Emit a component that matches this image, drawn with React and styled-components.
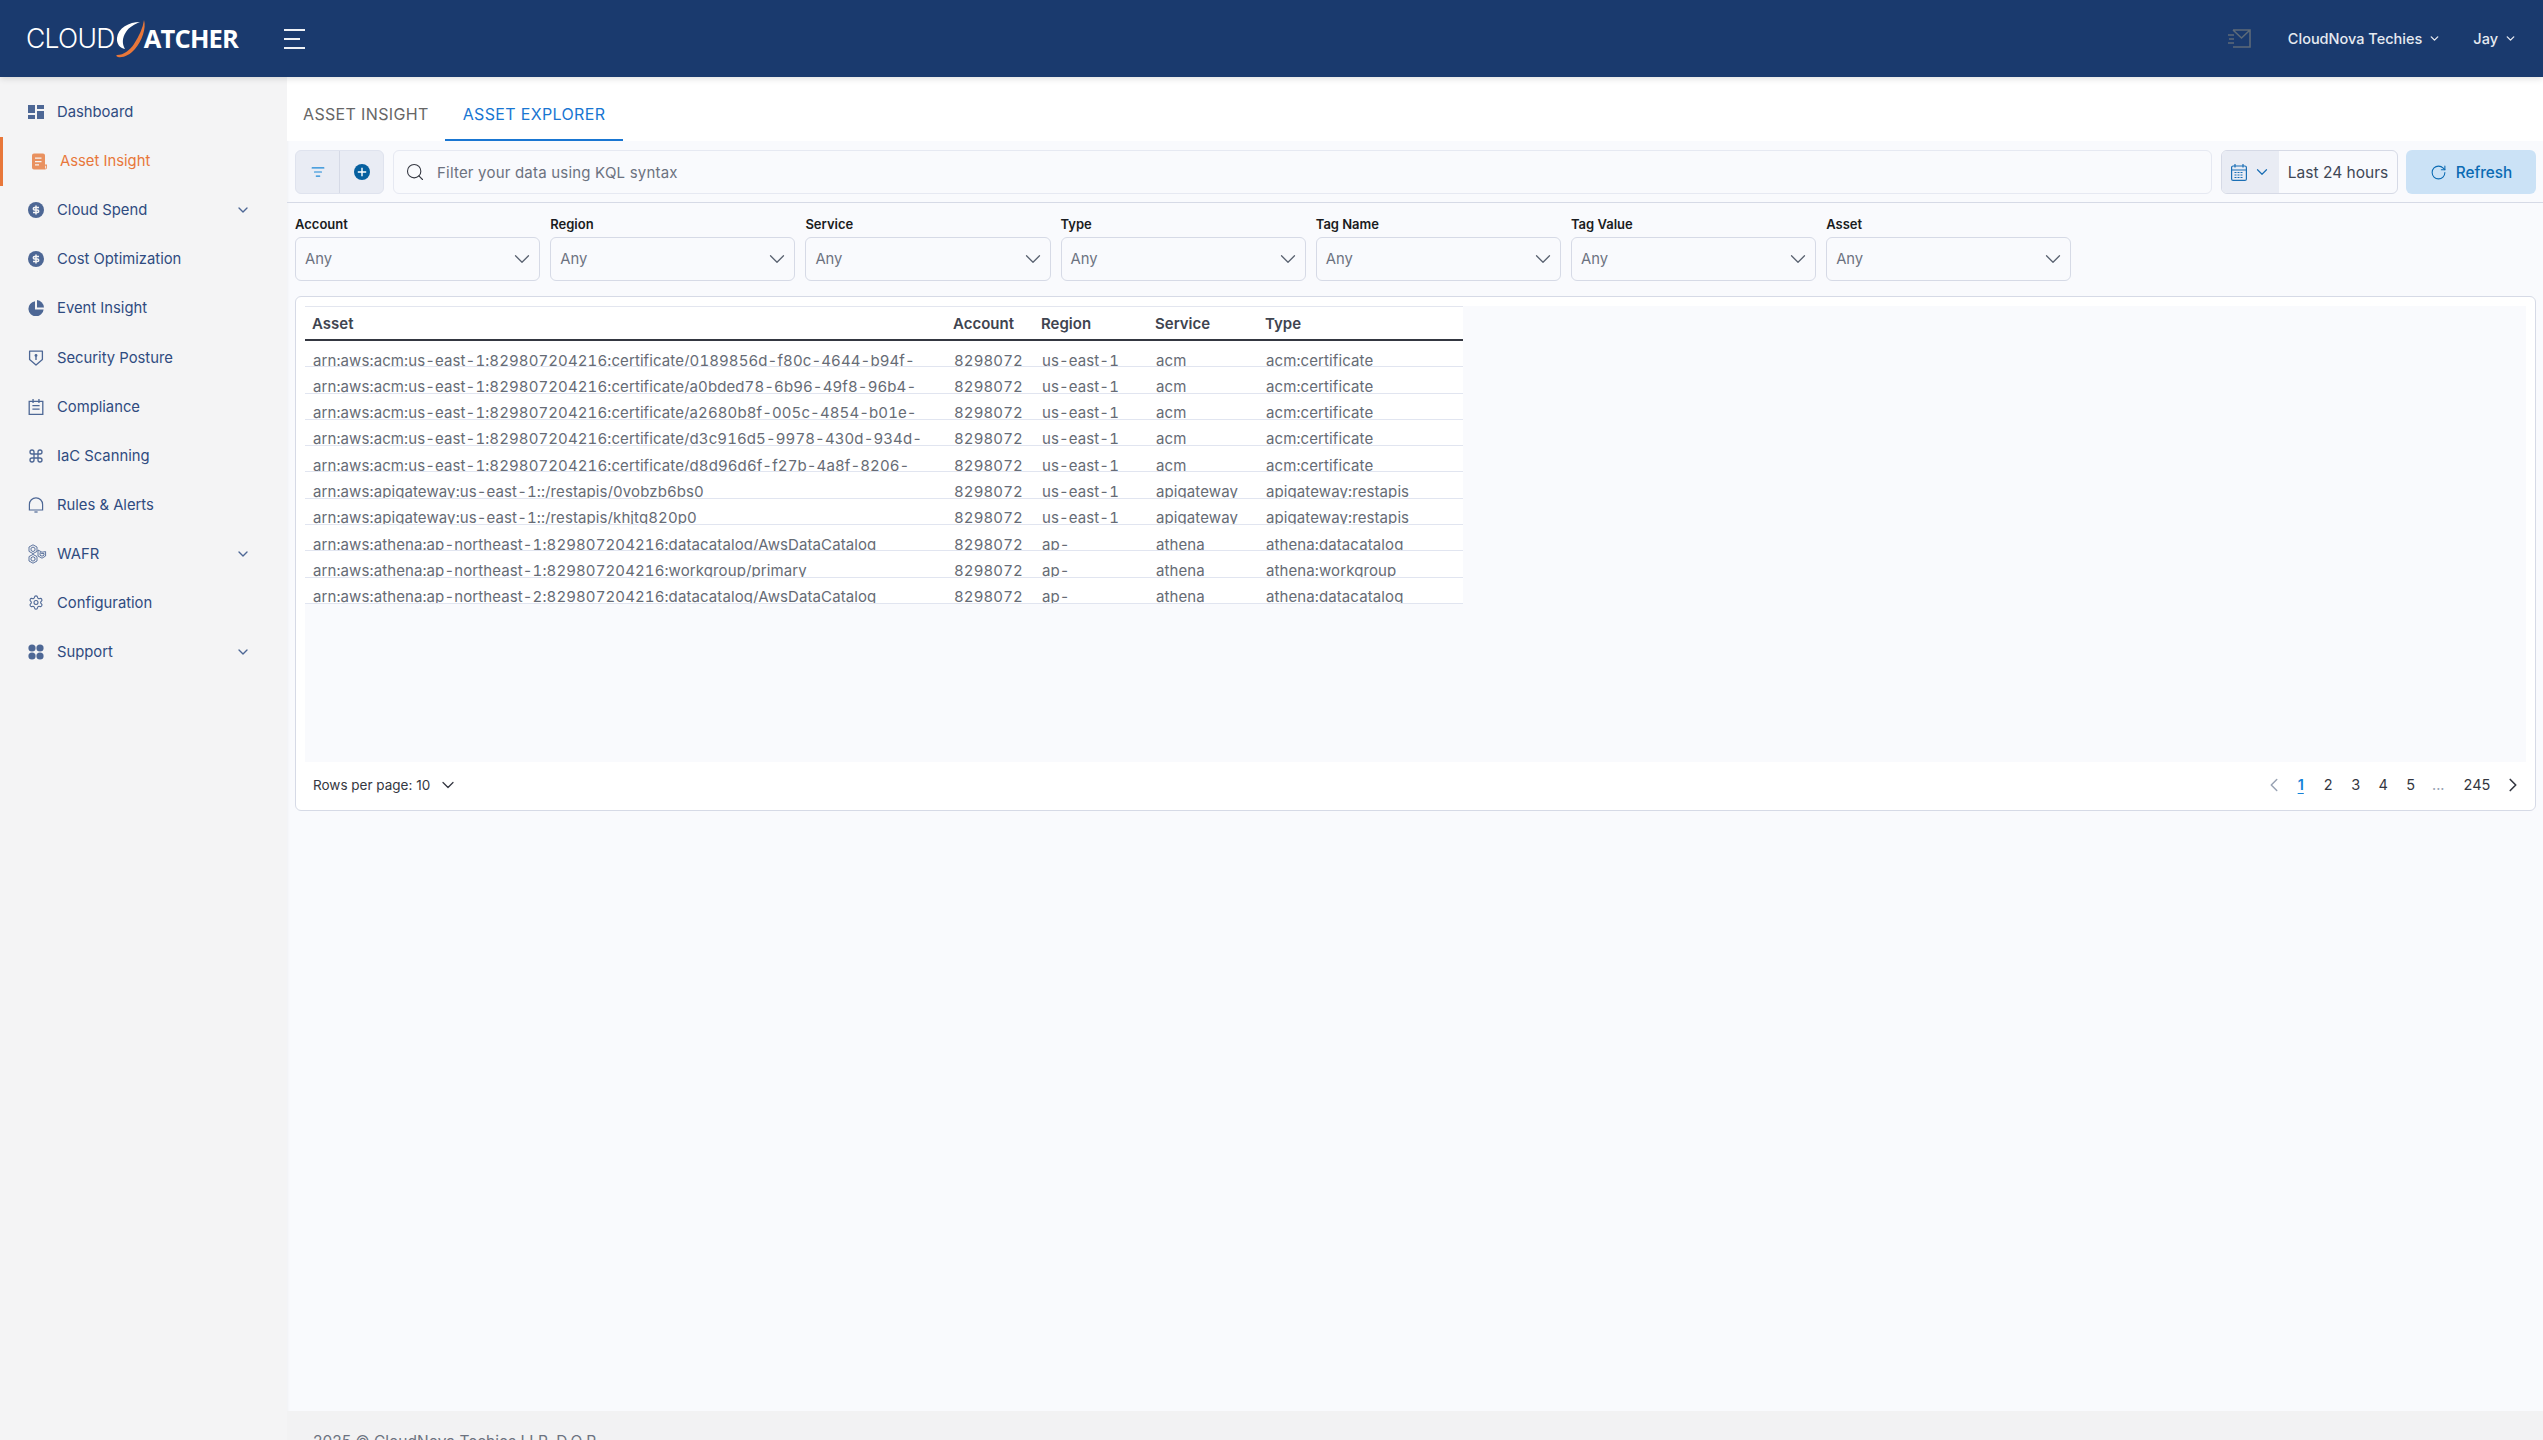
import React from "react";
import styled, { createGlobalStyle } from "styled-components";
import { ChevronDown, ChevronLeft, ChevronRight, Command, Search, RotateCw, Settings, ListFilter } from "lucide-react";

const navy = "#1a3a6e";
const slate = "#4d6795";

const GlobalStyle = createGlobalStyle`
  html, body {
    margin: 0;
    height: 100%;
    overflow: hidden;
    font-family: Inter, "Open Sans", sans-serif;
    background: #f9fafd;
  }
  * { box-sizing: border-box; }
`;

const Page = styled.div`
  height: 1440px;
  display: flex;
  flex-direction: column;
  overflow: hidden;
`;

const Header = styled.header`
  height: 77px;
  flex: none;
  background: ${navy};
  display: flex;
  align-items: center;
  padding: 0 26px;
  box-shadow: 0 2px 6px rgba(0, 0, 0, 0.12);
  z-index: 2;
`;

const Logo = styled.div`
  display: flex;
  align-items: center;
  width: 258px;
  color: #fff;
  font-size: 26.5px;
  line-height: 1;
`;

const LogoThin = styled.span`
  font-family: Inter, sans-serif;
  font-weight: 300;
  letter-spacing: -0.7px;
`;

const LogoBold = styled.span`
  font-family: "Open Sans", sans-serif;
  font-size: 25.5px;
  font-weight: 700;
  letter-spacing: -0.8px;
  margin-left: -3px;
`;

const Burger = styled.div`
  width: 21px;
  display: flex;
  flex-direction: column;
  gap: 7px;
`;

const BurgerLine = styled.span`
  display: block;
  height: 2px;
  width: ${(p) => (p.$short ? "16px" : "21px")};
  background: #eef1f6;
`;

const HeaderRight = styled.div`
  margin-left: auto;
  display: flex;
  align-items: center;
  color: #e6eaf1;
  font-size: 14.5px;
  font-weight: 500;
`;

const HeaderMenu = styled.div`
  display: flex;
  align-items: center;
  gap: 6px;
  margin-left: ${(p) => p.$gap}px;
`;

const Body = styled.div`
  flex: 1;
  display: flex;
  min-height: 0;
`;

const Sidebar = styled.nav`
  width: 287px;
  flex: none;
  background: #f4f4f5;
  padding-top: 10.5px;
  box-shadow: 1px 0 3px rgba(0, 0, 0, 0.04);
`;

const NavRow = styled.div`
  height: 49.1px;
  display: flex;
  align-items: center;
  padding-left: 28px;
  padding-right: 36px;
  gap: 13px;
  color: ${(p) => (p.$active ? "#e8773a" : "#2f4b80")};
  font-size: 14.8px;
  border-left: ${(p) => (p.$active ? "3px solid #e8773a" : "none")};
`;

const NavIcon = styled.span`
  width: 16px;
  height: 16px;
  flex: none;
  display: flex;
  align-items: center;
  justify-content: center;
  color: ${(p) => (p.$active ? "#e9915f" : slate)};
`;

const NavChevron = styled(ChevronDown)`
  margin-left: auto;
  color: ${slate};
`;

const Main = styled.main`
  flex: 1;
  min-width: 0;
  display: flex;
  flex-direction: column;
`;

const Tabs = styled.div`
  height: 64px;
  flex: none;
  background: #fff;
  display: flex;
  align-items: flex-end;
`;

const Tab = styled.div`
  height: 47px;
  padding: 0 ${(p) => (p.$active ? 18 : 16)}px;
  line-height: 41px;
  font-size: 16px;
  letter-spacing: 0.35px;
  color: ${(p) => (p.$active ? "#1976d2" : "#666")};
  border-bottom: 2px solid ${(p) => (p.$active ? "#1976d2" : "transparent")};
`;

const Toolbar = styled.div`
  height: 62px;
  flex: none;
  display: flex;
  align-items: flex-start;
  padding: 9px 7px 0 8px;
  gap: 9px;
  border-bottom: 1px solid #d6dae6;
`;

const ButtonGroup = styled.div`
  width: 89px;
  height: 44px;
  flex: none;
  display: flex;
  background: #e9ecf4;
  border: 1px solid #dfe3ee;
  border-radius: 6px;
`;

const GroupButton = styled.div`
  flex: 1;
  display: flex;
  align-items: center;
  justify-content: center;
  & + & {
    border-left: 1px solid #d6dae6;
  }
`;

const SearchBox = styled.div`
  flex: 1;
  height: 44px;
  display: flex;
  align-items: center;
  gap: 12px;
  padding: 0 11px;
  border: 1px solid #e6e9f2;
  border-radius: 6px;
  color: #6c7280;
  font-size: 15px;
  letter-spacing: 0.2px;
`;

const DatePicker = styled.div`
  width: 177px;
  height: 44px;
  flex: none;
  display: flex;
  border: 1px solid #d6dae6;
  border-radius: 6px;
  overflow: hidden;
  font-size: 15.5px;
  color: #3f4756;
`;

const DateIconPart = styled.div`
  width: 57px;
  flex: none;
  display: flex;
  align-items: center;
  justify-content: center;
  gap: 6px;
  background: #e9ecf4;
  color: #1b6fb5;
`;

const DateValue = styled.div`
  flex: 1;
  display: flex;
  align-items: center;
  justify-content: center;
  white-space: nowrap;
`;

const RefreshButton = styled.div`
  width: 130px;
  height: 44px;
  flex: none;
  margin-left: -1px;
  display: flex;
  align-items: center;
  justify-content: center;
  gap: 9px;
  background: #cbe2f6;
  border-radius: 6px;
  color: #0b6bb3;
  font-size: 15.3px;
  font-weight: 500;
`;

const Filters = styled.div`
  flex: none;
  display: flex;
  gap: 10px;
  padding: 12.5px 8px 0;
`;

const Filter = styled.div`
  width: 245.2px;
`;

const FilterLabel = styled.div`
  font-size: 13px;
  font-weight: 600;
  line-height: 16px;
  margin-bottom: 5.5px;
  color: #1a1c21;
`;

const Select = styled.div`
  height: 44px;
  display: flex;
  align-items: center;
  justify-content: space-between;
  padding: 0 4px 0 9px;
  border: 1px solid #d6dae6;
  border-radius: 6px;
  font-size: 14.8px;
  color: #6c7280;
`;

const Card = styled.section`
  margin: 15px 7px 0 8px;
  height: 515px;
  flex: none;
  background: #fff;
  border: 1px solid #d6dae6;
  border-radius: 6px;
  padding: 9px 9px 0;
`;

const TableArea = styled.div`
  height: 456px;
  background: #f9fafd;
`;

const Table = styled.div`
  width: 1158px;
  background: #fff;
  border-top: 1px solid #e3e6ef;
`;

const colTemplate = "641px 88px 114px 110px 1fr";

const HeadRow = styled.div`
  display: grid;
  grid-template-columns: ${colTemplate};
  height: 34px;
  align-items: center;
  border-bottom: 2px solid #343741;
`;

const HeadCell = styled.div`
  padding-left: 7px;
  font-size: 15px;
  font-weight: 600;
  color: #404450;
`;

const Row = styled.div`
  display: grid;
  grid-template-columns: ${colTemplate};
  height: 26.3px;
  align-items: start;
`;

const Cell = styled.div`
  height: 100%;
  overflow: hidden;
  padding: 10.5px 0 0 8px;
  font-size: 15px;
  font-feature-settings: "tnum";
  letter-spacing: 0.1px;
  line-height: 18px;
  white-space: nowrap;
  color: #666b75;
  border-bottom: 1px solid #e1e5f0;
`;

const CardFooter = styled.div`
  height: 45px;
  display: flex;
  align-items: center;
  justify-content: space-between;
  padding: 0 2px 0 8px;
  font-size: 13.5px;
  color: #343741;
`;

const RowsPerPage = styled.div`
  display: flex;
  align-items: center;
  gap: 8px;
`;

const Pager = styled.div`
  display: flex;
  align-items: center;
  font-size: 14.5px;
`;

const PageNumber = styled.span`
  width: 27.5px;
  text-align: center;
  color: ${(p) => (p.$active ? "#1482d8" : p.$muted ? "#98a2b3" : "#343741")};
  font-weight: ${(p) => (p.$active ? 600 : 400)};
  text-decoration: ${(p) => (p.$active ? "underline" : "none")};
  text-underline-offset: 3px;
`;

const PageWide = styled(PageNumber)`
  width: 50px;
`;

const PrevIcon = styled(ChevronLeft)`
  margin-right: 2px;
`;

const Spacer = styled.div`
  flex: 1;
`;

const Footer = styled.footer`
  height: 29px;
  flex: none;
  background: #f2f2f3;
  padding: 22.5px 0 0 26px;
  font-size: 15.5px;
  line-height: 16px;
  color: #6c7280;
  overflow: hidden;
`;

const Glyph = ({ size = 16, children, fill = "currentColor" }) => (
  <svg width={size} height={size} viewBox="0 0 16 16" fill={fill}>
    {children}
  </svg>
);

const DollarIcon = () => (
  <Glyph>
    <circle cx="8" cy="8" r="8" />
    <path d="M11 5.4H6.6a1.3 1.3 0 0 0 0 2.6h2.8a1.3 1.3 0 0 1 0 2.6H5M8 3.6v8.8" fill="none" stroke="#f4f4f5" strokeWidth="1.5" />
  </Glyph>
);

const icons = {
  dashboard: (
    <Glyph>
      <path d="M0 1h7v8H0zM9 1h7v4H9zM9 7h7v8H9zM0 11h7v4H0z" />
    </Glyph>
  ),
  asset: (
    <Glyph size={17}>
      <path fillRule="evenodd" d="M1 2a2 2 0 0 1 2-2h9a2 2 0 0 1 2 2v9h2v3a2 2 0 0 1-2 2H3a2 2 0 0 1-2-2zM4 4v1.3h6.5V4zm0 3.4v1.3h6.5V7.4zm0 3.4v1.3h4v-1.3zm10.2 1.4V15h.3a.6.6 0 0 0 .6-.6v-2.2z" />
    </Glyph>
  ),
  dollar: <DollarIcon />,
  pie: (
    <Glyph>
      <path d="M7 1.2A7.6 7.6 0 1 0 15.6 9.4H7z" />
      <path d="M9 0v7.4h7A8 8 0 0 0 9 0z" />
    </Glyph>
  ),
  shield: (
    <Glyph>
      <path d="M1.6 1.2h12.8v8.4L8 15 1.6 9.6z" fill="none" stroke="currentColor" strokeWidth="1.3" strokeLinejoin="round" />
      <circle cx="8" cy="5.4" r="1.4" />
      <path d="M7.3 6h1.4v4H7.3z" />
    </Glyph>
  ),
  compliance: (
    <Glyph>
      <path d="M1.2 2.4h13.6v13H1.2z" fill="none" stroke="currentColor" strokeWidth="1.3" />
      <path d="M4.4 0h1.3v4H4.4zM10.3 0h1.3v4h-1.3zM4.4 6h7.2v1.3H4.4zM4.4 9.4h7.2v1.3H4.4z" />
    </Glyph>
  ),
  iac: <Command size={16} strokeWidth={2} />,
  bell: (
    <Glyph>
      <path d="M1.4 13V7.4a6.6 6.6 0 0 1 13.2 0V13z" fill="none" stroke="currentColor" strokeWidth="1.2" />
      <path d="M6.4 14.4h3.2v1.2H6.4z" />
    </Glyph>
  ),
  wafr: (
    <svg width="20" height="20" viewBox="0 0 20 20" fill="none" stroke="currentColor" strokeWidth="0.9" style={{ marginLeft: 2, flex: "none" }}>
      <path d="M6 .8 10 3v4.4L6 9.6 2 7.4V3zM6 3 8 4.2v2.2L6 7.6 4 6.4V4.2zM6 10.4 10 12.6V17l-4 2.2L2 17v-4.4zM6 12.6 8 13.8V16l-2 1.2L4 16v-2.2zM11 6l4 2.2 3.6-.6v4.4L15 14.2 11 12zM13 8.6l2 1 2-.2v1.8l-2 1-2-1z" />
    </svg>
  ),
  config: <Settings size={17} strokeWidth={1.6} />,
  support: (
    <Glyph>
      <circle cx="4" cy="4" r="3.6" />
      <circle cx="12" cy="4" r="3.6" />
      <circle cx="4" cy="12" r="3.6" />
      <circle cx="12" cy="12" r="3.6" />
    </Glyph>
  ),
};

const navItems = [
  { label: "Dashboard", icon: "dashboard" },
  { label: "Asset Insight", icon: "asset", active: true },
  { label: "Cloud Spend", icon: "dollar", more: true },
  { label: "Cost Optimization", icon: "dollar" },
  { label: "Event Insight", icon: "pie" },
  { label: "Security Posture", icon: "shield" },
  { label: "Compliance", icon: "compliance" },
  { label: "IaC Scanning", icon: "iac" },
  { label: "Rules & Alerts", icon: "bell" },
  { label: "WAFR", icon: "wafr", more: true },
  { label: "Configuration", icon: "config" },
  { label: "Support", icon: "support", more: true },
];

const filters = ["Account", "Region", "Service", "Type", "Tag Name", "Tag Value", "Asset"];

const acmType = ["8298072", "us-east-1", "acm", "acm:certificate"];
const apiType = ["8298072", "us-east-1", "apigateway", "apigateway:restapis"];
const rows = [
  ["arn:aws:acm:us-east-1:829807204216:certificate/0189856d-f80c-4644-b94f-", ...acmType],
  ["arn:aws:acm:us-east-1:829807204216:certificate/a0bded78-6b96-49f8-96b4-", ...acmType],
  ["arn:aws:acm:us-east-1:829807204216:certificate/a2680b8f-005c-4854-b01e-", ...acmType],
  ["arn:aws:acm:us-east-1:829807204216:certificate/d3c916d5-9978-430d-934d-", ...acmType],
  ["arn:aws:acm:us-east-1:829807204216:certificate/d8d96d6f-f27b-4a8f-8206-", ...acmType],
  ["arn:aws:apigateway:us-east-1::/restapis/0vobzb6bs0", ...apiType],
  ["arn:aws:apigateway:us-east-1::/restapis/khjtq820p0", ...apiType],
  ["arn:aws:athena:ap-northeast-1:829807204216:datacatalog/AwsDataCatalog", "8298072", "ap-", "athena", "athena:datacatalog"],
  ["arn:aws:athena:ap-northeast-1:829807204216:workgroup/primary", "8298072", "ap-", "athena", "athena:workgroup"],
  ["arn:aws:athena:ap-northeast-2:829807204216:datacatalog/AwsDataCatalog", "8298072", "ap-", "athena", "athena:datacatalog"],
];

const App = () => (
  <Page>
    <GlobalStyle />
    <Header>
      <Logo>
        <LogoThin>CLOUD</LogoThin>
        <svg width="32" height="40" viewBox="0 0 32 40" style={{ flex: "none" }}>
          <path d="M25 3C14 3 3 9 2 19c-.6 6 3 10 8 11-3-5-3-11 1-17 3-5 9-8 14-10z" fill="#fff" />
          <path d="M29 1c2.5 8-2 21-9 29-5 6-12 9-17 8-2-.5-2-2-1-2 7 0 13-5 17-11 5-8 9-16 10-24z" fill="#e8773a" />
        </svg>
        <LogoBold>ATCHER</LogoBold>
      </Logo>
      <Burger>
        <BurgerLine />
        <BurgerLine $short />
        <BurgerLine />
      </Burger>
      <HeaderRight>
        <svg width="23" height="19" viewBox="0 0 23 19" fill="none" stroke="#5d6a78" strokeWidth="1.6">
          <path d="M5 1h17v17H5M5 1l8.5 8L22 1M0 6h6M1 10h5M0 14h6" />
        </svg>
        <HeaderMenu $gap={37}>
          CloudNova Techies
          <ChevronDown size={13} strokeWidth={2.5} />
        </HeaderMenu>
        <HeaderMenu $gap={32}>
          Jay
          <ChevronDown size={13} strokeWidth={2.5} />
        </HeaderMenu>
      </HeaderRight>
    </Header>
    <Body>
      <Sidebar>
        {navItems.map((item) => (
          <NavRow key={item.label} $active={item.active}>
            <NavIcon $active={item.active}>{icons[item.icon]}</NavIcon>
            {item.label}
            {item.more && <NavChevron size={16} />}
          </NavRow>
        ))}
      </Sidebar>
      <Main>
        <Tabs>
          <Tab>ASSET INSIGHT</Tab>
          <Tab $active>ASSET EXPLORER</Tab>
        </Tabs>
        <Toolbar>
          <ButtonGroup>
            <GroupButton>
              <ListFilter size={14} color="#1b87d6" />
            </GroupButton>
            <GroupButton>
              <svg width="16" height="16" viewBox="0 0 16 16">
                <circle cx="8" cy="8" r="8" fill="#06609f" />
                <path d="M8 3.8v8.4M3.8 8h8.4" stroke="#fff" strokeWidth="1.4" />
              </svg>
            </GroupButton>
          </ButtonGroup>
          <SearchBox>
            <Search size={20} color="#343741" strokeWidth={1.3} />
            Filter your data using KQL syntax
          </SearchBox>
          <DatePicker>
            <DateIconPart>
              <svg width="16" height="17" viewBox="0 0 16 17" fill="none" stroke="currentColor" strokeWidth="1.2">
                <rect x="0.6" y="2" width="14.8" height="14.4" rx="1.5" />
                <path d="M1 6h14M4 0v3.5M12 0v3.5" />
                <path d="M3.5 8.5h9M3.5 11h9M3.5 13.5h9" strokeDasharray="2 1" />
              </svg>
              <ChevronDown size={18} strokeWidth={1.6} />
            </DateIconPart>
            <DateValue>Last 24 hours</DateValue>
          </DatePicker>
          <RefreshButton>
            <RotateCw size={17} strokeWidth={1.5} />
            Refresh
          </RefreshButton>
        </Toolbar>
        <Filters>
          {filters.map((name) => (
            <Filter key={name}>
              <FilterLabel>{name}</FilterLabel>
              <Select>
                Any
                <ChevronDown size={26} strokeWidth={1.2} color="#5a6270" />
              </Select>
            </Filter>
          ))}
        </Filters>
        <Card>
          <TableArea>
            <Table>
              <HeadRow>
                {["Asset", "Account", "Region", "Service", "Type"].map((h) => (
                  <HeadCell key={h}>{h}</HeadCell>
                ))}
              </HeadRow>
              {rows.map((row) => (
                <Row key={row[0]}>
                  {row.map((value, i) => (
                    <Cell key={i}>{value}</Cell>
                  ))}
                </Row>
              ))}
            </Table>
          </TableArea>
          <CardFooter>
            <RowsPerPage>
              Rows per page: 10
              <ChevronDown size={20} strokeWidth={1.5} />
            </RowsPerPage>
            <Pager>
              <PrevIcon size={22} strokeWidth={1.6} color="#98a2b3" />
              <PageNumber $active>1</PageNumber>
              <PageNumber>2</PageNumber>
              <PageNumber>3</PageNumber>
              <PageNumber>4</PageNumber>
              <PageNumber>5</PageNumber>
              <PageNumber $muted>...</PageNumber>
              <PageWide>245</PageWide>
              <ChevronRight size={22} strokeWidth={1.8} color="#343741" />
            </Pager>
          </CardFooter>
        </Card>
        <Spacer />
        <Footer>2025 © CloudNova Techies LLP. D.O.P.</Footer>
      </Main>
    </Body>
  </Page>
);

export default App;
